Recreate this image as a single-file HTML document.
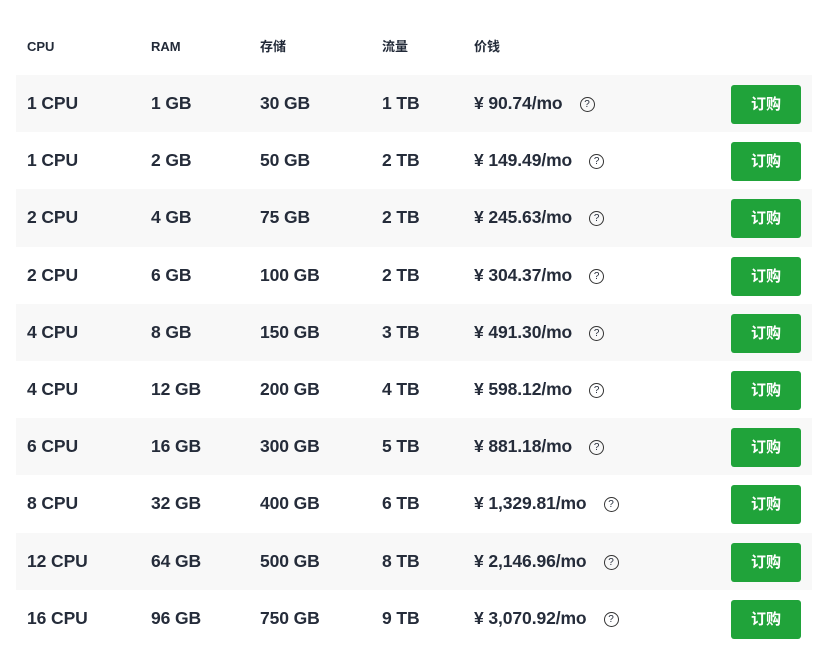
<!DOCTYPE html>
<html><head><meta charset="utf-8"><style>
body{margin:0;width:828px;height:653px;background:#fff;font-family:"Liberation Sans","Noto Sans CJK SC",sans-serif;color:#1d2433;overflow:hidden;position:relative}
.h{position:absolute;top:38px;line-height:18px;height:18px;font-size:13px;font-weight:bold;color:#222a38}
.row{position:absolute;left:16px;width:796px;height:57.2px}
.row.s{background:#f8f8f8}
.c{position:absolute;top:0;line-height:57px;font-size:17.5px;font-weight:bold;letter-spacing:-0.1px;color:#252c3a}
.q{display:inline-block;width:13px;height:13px;border:1.3px solid #333;border-radius:50%;font-size:10px;line-height:13px;text-align:center;vertical-align:2px;margin-left:17px;font-weight:normal;letter-spacing:0}
.b{position:absolute;left:715px;top:10px;width:70px;height:39px;background:#20a33a;border-radius:3px;color:#fff;font-size:15px;font-weight:bold;text-align:center;line-height:39px}
</style></head><body>
<div class="h" style="left:27px">CPU</div>
<div class="h" style="left:151px">RAM</div>
<div class="h" style="left:260px">存储</div>
<div class="h" style="left:382px">流量</div>
<div class="h" style="left:474px">价钱</div>
<div id="t"></div>
<script>
var d=[["1 CPU","1 GB","30 GB","1 TB","90.74"],["1 CPU","2 GB","50 GB","2 TB","149.49"],["2 CPU","4 GB","75 GB","2 TB","245.63"],["2 CPU","6 GB","100 GB","2 TB","304.37"],["4 CPU","8 GB","150 GB","3 TB","491.30"],["4 CPU","12 GB","200 GB","4 TB","598.12"],["6 CPU","16 GB","300 GB","5 TB","881.18"],["8 CPU","32 GB","400 GB","6 TB","1,329.81"],["12 CPU","64 GB","500 GB","8 TB","2,146.96"],["16 CPU","96 GB","750 GB","9 TB","3,070.92"]];
var h="";d.forEach(function(r,i){h+='<div class="row'+(i%2==0?' s':'')+'" style="top:'+(75+i*57.2)+'px"><div class="c" style="left:11px">'+r[0]+'</div><div class="c" style="left:135px">'+r[1]+'</div><div class="c" style="left:244px">'+r[2]+'</div><div class="c" style="left:366px">'+r[3]+'</div><div class="c" style="left:458px">¥ '+r[4]+'/mo<span class="q">?</span></div><div class="b">订购</div></div>'});
document.getElementById("t").innerHTML=h;
</script>
</body></html>
